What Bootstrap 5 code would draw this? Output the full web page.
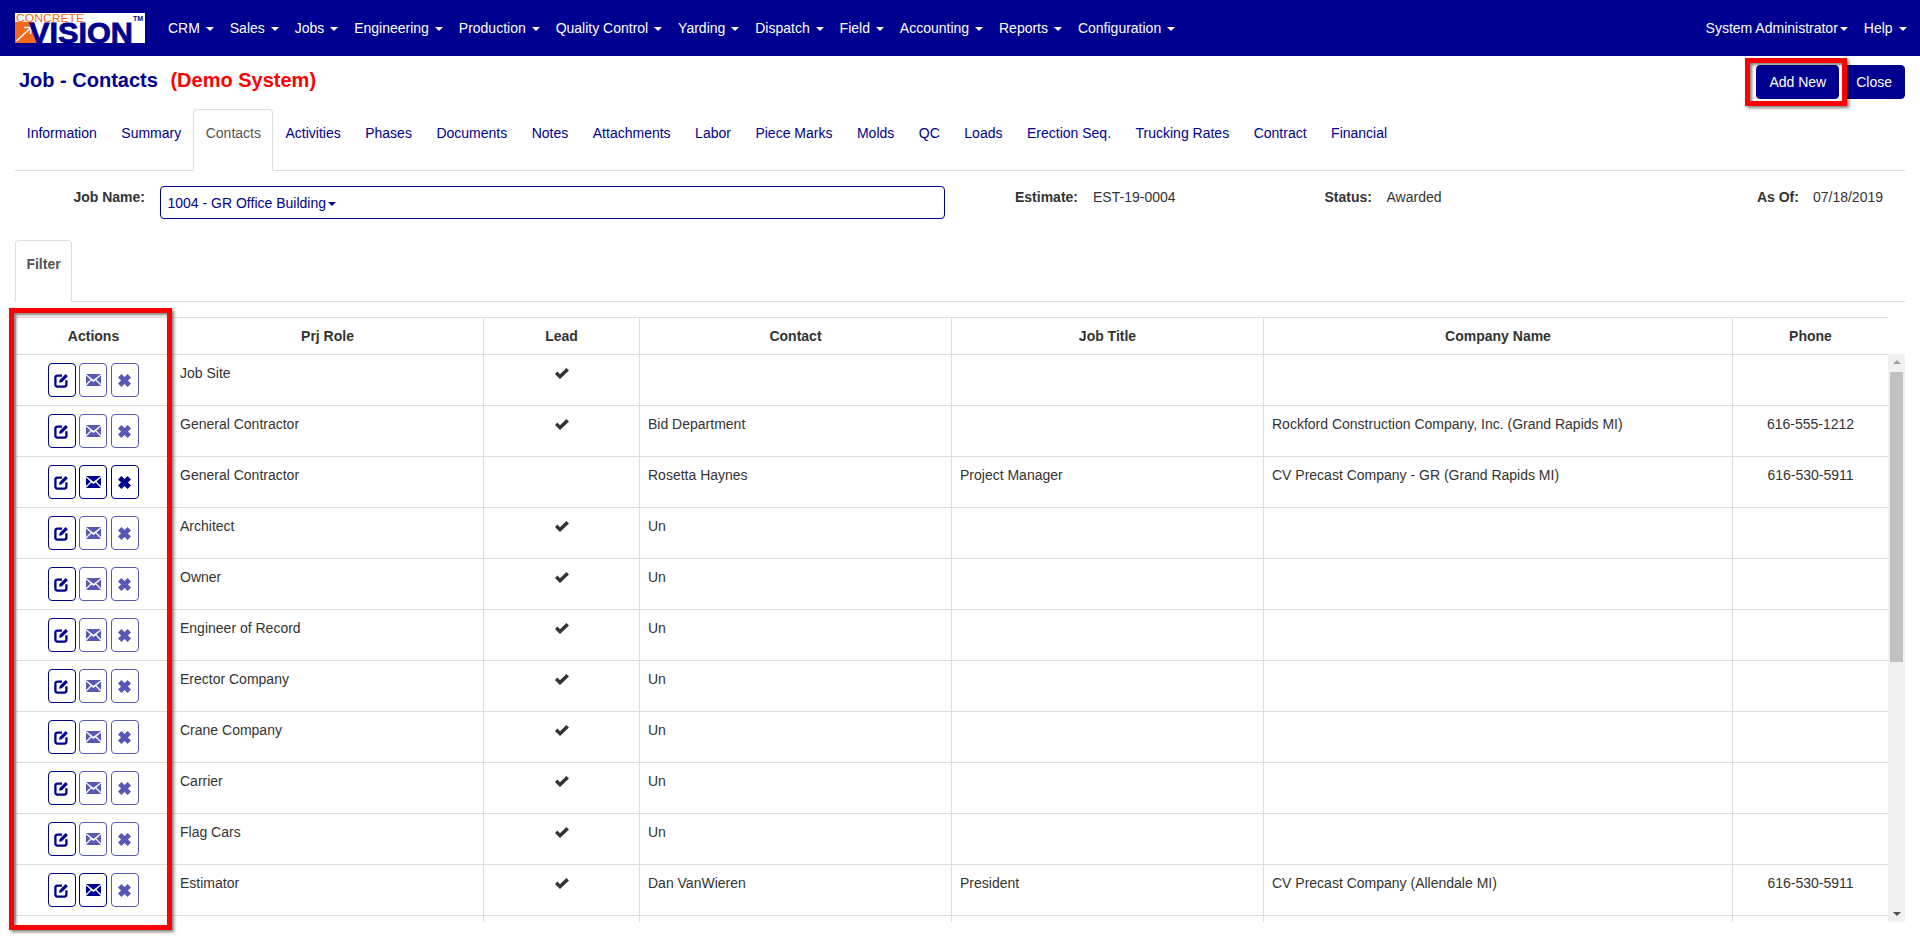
<!DOCTYPE html>
<html lang="en">
<head>
<meta charset="utf-8">
<title>Job - Contacts</title>
<link href="https://cdn.jsdelivr.net/npm/bootstrap@5.3.0/dist/css/bootstrap.min.css" rel="stylesheet">
<style>
:root{--cv-navy:#000090;--cv-line:#ddd;--cv-text:#333;}
html,body{height:937px;overflow:hidden;}
body{font-family:"Liberation Sans",Arial,sans-serif;font-size:14px;line-height:20px;color:var(--cv-text);background:#fff;position:relative;}
.topbar{background:var(--cv-navy);height:56px;padding:0 5.5px 0 15px;}
.topbar .brandmark{display:block;width:130px;height:30px;margin-right:15px;}
.topbar .brandmark svg{overflow:visible;}
.topbar .nav-link{color:#fff;padding:0 8px;font-size:14px;line-height:20px;}
.topbar .nav-link:hover{color:#fff;}
.dropdown-toggle::after{border-top:4px solid;border-left:4px solid transparent;border-right:4px solid transparent;border-bottom:0;margin-left:2px;vertical-align:middle;}
.pagewrap{padding:0 15px;}
.titlerow{height:53px;padding-top:9px;}
.pagetitle{font-size:20px;font-weight:700;line-height:30px;color:var(--cv-navy);margin:0 0 0 4px;}
.pagetitle .demotag{color:#f00;margin-left:7px;}
.cvbtn{background:var(--cv-navy);border:1px solid var(--cv-navy);color:#fff;font-size:14px;line-height:20px;padding:6px 12px;border-radius:4px;height:34px;}
.cvbtn:hover{background:var(--cv-navy);color:#fff;}
.tabstrip{--bs-nav-tabs-border-color:var(--cv-line);--bs-nav-tabs-border-radius:4px;--bs-nav-tabs-link-active-border-color:var(--cv-line) var(--cv-line) #fff;--bs-nav-tabs-link-active-color:#555;--bs-nav-link-color:var(--cv-navy);height:62px;}
.tabstrip .nav-item:first-child{margin-left:-.5px;}
.tabstrip .nav-link{padding:13px 11.25px 27px;font-size:14px;line-height:20px;height:62px;margin-bottom:-1px;}
.infobar{height:69px;padding-top:15px;}
.infobar dt,.infobar dd{margin:0;line-height:20px;padding-top:1px;}
.infobar dt{font-weight:700;}
.infobar .lbl-job{width:130px;text-align:right;margin-right:15px;}
.jobpicker{width:785px;height:33px;border:1px solid var(--cv-navy);border-radius:4px;color:var(--cv-navy);padding:6px 6.5px;margin:0 70px 0 0;background:#fff;text-align:left;line-height:20px;font-size:14px;}
.infobar .val-est{width:231.5px;margin-left:15px;}
.infobar .val-status{margin-left:14.5px;}
.infobar .val-asof{margin-left:14px;margin-right:22px;}
.filtertabs{height:62px;--bs-nav-tabs-border-color:var(--cv-line);--bs-nav-tabs-border-radius:4px;--bs-nav-tabs-link-active-border-color:var(--cv-line) var(--cv-line) #fff;--bs-nav-tabs-link-active-color:#555;}
.filtertabs .nav-link{font-weight:700;padding:13px 10.4px 27px;height:62px;margin-bottom:-1px;}
.gridarea{margin-top:15px;height:605px;}
.gridclip{width:1873px;height:605px;overflow:hidden;flex:none;}
.gridtable{table-layout:fixed;width:1873px;--bs-table-border-color:var(--cv-line);--bs-table-color:var(--cv-text);margin:0;border-collapse:collapse;}
.gridtable th{font-weight:700;text-align:center;height:37px;padding:8px;line-height:20px;vertical-align:middle;}
.gridtable td{height:51px;padding:8px;line-height:20px;vertical-align:top;}
.actcell{display:flex;justify-content:center;gap:3.5px;margin-right:1px;}
.actbtn{width:28px;height:34px;padding:0;background:#fff;border:1px solid var(--cv-navy);border-radius:4px;color:var(--cv-navy);display:flex;align-items:center;justify-content:center;--bs-btn-disabled-bg:#fff;--bs-btn-disabled-border-color:var(--cv-navy);--bs-btn-disabled-color:var(--cv-navy);}
.actbtn.disabled{opacity:.65;}
.actbtn svg{display:block;fill:currentColor;}
.tickmark{display:block;margin:5px auto 0;fill:var(--cv-text);}
.phonecell{text-align:center;}
.fakebar{width:17px;height:568px;margin-top:37px;background:#f1f1f1;position:relative;flex:none;padding-top:18px;}
.fakebar .thumbpart{width:13px;height:290px;margin-left:2px;background:#c1c1c1;}
.arrowup,.arrowdown{position:absolute;left:5px;width:0;height:0;border-left:4px solid transparent;border-right:4px solid transparent;}
.arrowup{top:6px;border-bottom:4px solid #a3a3a3;}
.arrowdown{bottom:6px;border-top:4px solid #505050;}
.callout{position:absolute;border:5px solid #f00;pointer-events:none;box-shadow:2px 2px 3px rgba(0,0,0,.5),inset 2px 2px 3px rgba(0,0,0,.5);z-index:5;}
.callout-add{left:1745px;top:58px;width:102px;height:48px;}
.callout-actions{left:9px;top:308px;width:163px;height:622px;}
</style>
</head>
<body>
<svg width="0" height="0" class="position-absolute">
  <symbol id="ic-edit" viewBox="0 0 15 15"><path d="M8 2.6H3.4A2 2 0 0 0 1.4 4.6v7a2 2 0 0 0 2 2h7a2 2 0 0 0 2-2V7.2" fill="none" stroke="currentColor" stroke-width="2.3"/><path d="M5.6 6.9 11.6 1l2.3 2.2-6 6-2.8.5z"/></symbol>
  <symbol id="ic-mail" viewBox="0 0 15 12"><path d="M0 0h15L7.5 5.8z"/><path d="M0 1.4 4.6 5.4 0 10zM15 1.4 10.4 5.4 15 10z"/><path d="M0 12 5.4 6.4 7.5 8 9.6 6.4 15 12z"/></symbol>
  <symbol id="ic-x" viewBox="0 0 13 13"><path d="M3.4 0 6.5 3.1 9.6 0 13 3.4 9.9 6.5 13 9.6 9.6 13 6.5 9.9 3.4 13 0 9.6 3.1 6.5 0 3.4z"/></symbol>
  <symbol id="ic-tick" viewBox="0 0 14 11"><path d="M0 6 2.4 3.6 5 6.2 11.4 0 14 2.4 5 11z"/></symbol>
</svg>

<nav class="topbar d-flex align-items-center">
  <a href="#" class="brandmark" aria-label="Concrete Vision">
    <svg width="130" height="30" viewBox="0 0 130 30">
      <rect width="130" height="30" fill="#fff"/>
      <path d="M0 9H19L25 30H0z" fill="#f26a1b"/>
      <path d="M1.5 28 15 15.5" stroke="#fff" stroke-width="1.5" fill="none"/>
      <path d="M9 14.5 16 14.5 15.5 21" stroke="#fff" stroke-width="1.5" fill="none"/>
      <text x="1" y="8.5" font-family="Liberation Sans" font-size="11.5" fill="#f26a1b" textLength="68" lengthAdjust="spacingAndGlyphs">CONCRETE</text>
      <text x="14" y="29.5" font-family="Liberation Sans" font-size="29" font-weight="700" fill="#000090" stroke="#000090" stroke-width=".8" textLength="104" lengthAdjust="spacingAndGlyphs">VISION</text>
      <text x="118" y="8" font-family="Liberation Sans" font-size="7" font-weight="700" fill="#000090" textLength="10" lengthAdjust="spacingAndGlyphs">TM</text>
    </svg>
  </a>
  <ul class="nav flex-nowrap">
    <li class="nav-item"><a class="nav-link dropdown-toggle" href="#">CRM </a></li>
    <li class="nav-item"><a class="nav-link dropdown-toggle" href="#">Sales </a></li>
    <li class="nav-item"><a class="nav-link dropdown-toggle" href="#">Jobs </a></li>
    <li class="nav-item"><a class="nav-link dropdown-toggle" href="#">Engineering </a></li>
    <li class="nav-item"><a class="nav-link dropdown-toggle" href="#">Production </a></li>
    <li class="nav-item"><a class="nav-link dropdown-toggle" href="#">Quality Control </a></li>
    <li class="nav-item"><a class="nav-link dropdown-toggle" href="#">Yarding </a></li>
    <li class="nav-item"><a class="nav-link dropdown-toggle" href="#">Dispatch </a></li>
    <li class="nav-item"><a class="nav-link dropdown-toggle" href="#">Field </a></li>
    <li class="nav-item"><a class="nav-link dropdown-toggle" href="#">Accounting </a></li>
    <li class="nav-item"><a class="nav-link dropdown-toggle" href="#">Reports </a></li>
    <li class="nav-item"><a class="nav-link dropdown-toggle" href="#">Configuration </a></li>
  </ul>
  <ul class="nav flex-nowrap ms-auto">
    <li class="nav-item"><a class="nav-link dropdown-toggle" href="#">System Administrator</a></li>
    <li class="nav-item"><a class="nav-link dropdown-toggle" href="#">Help </a></li>
  </ul>
</nav>

<main class="pagewrap">
  <div class="titlerow d-flex justify-content-between align-items-start">
    <h1 class="pagetitle">Job - Contacts <span class="demotag">(Demo System)</span></h1>
    <div class="d-flex gap-1">
      <button type="button" class="btn cvbtn">Add New</button>
      <button type="button" class="btn cvbtn">Close</button>
    </div>
  </div>

  <ul class="nav nav-tabs tabstrip flex-nowrap">
    <li class="nav-item"><a class="nav-link" href="#">Information</a></li>
    <li class="nav-item"><a class="nav-link" href="#">Summary</a></li>
    <li class="nav-item"><a class="nav-link active" href="#">Contacts</a></li>
    <li class="nav-item"><a class="nav-link" href="#">Activities</a></li>
    <li class="nav-item"><a class="nav-link" href="#">Phases</a></li>
    <li class="nav-item"><a class="nav-link" href="#">Documents</a></li>
    <li class="nav-item"><a class="nav-link" href="#">Notes</a></li>
    <li class="nav-item"><a class="nav-link" href="#">Attachments</a></li>
    <li class="nav-item"><a class="nav-link" href="#">Labor</a></li>
    <li class="nav-item"><a class="nav-link" href="#">Piece Marks</a></li>
    <li class="nav-item"><a class="nav-link" href="#">Molds</a></li>
    <li class="nav-item"><a class="nav-link" href="#">QC</a></li>
    <li class="nav-item"><a class="nav-link" href="#">Loads</a></li>
    <li class="nav-item"><a class="nav-link" href="#">Erection Seq.</a></li>
    <li class="nav-item"><a class="nav-link" href="#">Trucking Rates</a></li>
    <li class="nav-item"><a class="nav-link" href="#">Contract</a></li>
    <li class="nav-item"><a class="nav-link" href="#">Financial</a></li>
  </ul>

  <dl class="infobar d-flex align-items-start m-0">
    <dt class="lbl-job">Job Name:</dt>
    <dd class="p-0"><div class="jobpicker dropdown-toggle">1004 - GR Office Building</div></dd>
    <dt>Estimate:</dt>
    <dd class="val-est">EST-19-0004</dd>
    <dt>Status:</dt>
    <dd class="val-status">Awarded</dd>
    <dt class="ms-auto">As Of:</dt>
    <dd class="val-asof">07/18/2019</dd>
  </dl>

  <ul class="nav nav-tabs filtertabs">
    <li class="nav-item"><a class="nav-link active" href="#">Filter</a></li>
  </ul>

  <div class="gridarea d-flex">
    <div class="gridclip">
      <table class="table table-bordered gridtable">
        <colgroup><col style="width:156px"><col style="width:312px"><col style="width:156px"><col style="width:312px"><col style="width:312px"><col style="width:469px"><col style="width:156px"></colgroup>
        <thead>
          <tr><th>Actions</th><th>Prj Role</th><th>Lead</th><th>Contact</th><th>Job Title</th><th>Company Name</th><th>Phone</th></tr>
        </thead>
        <tbody>
          <tr><td><div class="actcell"><a class="btn actbtn"><svg width="15" height="15"><use href="#ic-edit"/></svg></a><a class="btn actbtn disabled"><svg width="15" height="12"><use href="#ic-mail"/></svg></a><a class="btn actbtn disabled"><svg width="13" height="13"><use href="#ic-x"/></svg></a></div></td><td>Job Site</td><td><svg class="tickmark" width="14" height="11"><use href="#ic-tick"/></svg></td><td></td><td></td><td></td><td class="phonecell"></td></tr>
          <tr><td><div class="actcell"><a class="btn actbtn"><svg width="15" height="15"><use href="#ic-edit"/></svg></a><a class="btn actbtn disabled"><svg width="15" height="12"><use href="#ic-mail"/></svg></a><a class="btn actbtn disabled"><svg width="13" height="13"><use href="#ic-x"/></svg></a></div></td><td>General Contractor</td><td><svg class="tickmark" width="14" height="11"><use href="#ic-tick"/></svg></td><td>Bid Department</td><td></td><td>Rockford Construction Company, Inc. (Grand Rapids MI)</td><td class="phonecell">616-555-1212</td></tr>
          <tr><td><div class="actcell"><a class="btn actbtn"><svg width="15" height="15"><use href="#ic-edit"/></svg></a><a class="btn actbtn"><svg width="15" height="12"><use href="#ic-mail"/></svg></a><a class="btn actbtn"><svg width="13" height="13"><use href="#ic-x"/></svg></a></div></td><td>General Contractor</td><td></td><td>Rosetta Haynes</td><td>Project Manager</td><td>CV Precast Company - GR (Grand Rapids MI)</td><td class="phonecell">616-530-5911</td></tr>
          <tr><td><div class="actcell"><a class="btn actbtn"><svg width="15" height="15"><use href="#ic-edit"/></svg></a><a class="btn actbtn disabled"><svg width="15" height="12"><use href="#ic-mail"/></svg></a><a class="btn actbtn disabled"><svg width="13" height="13"><use href="#ic-x"/></svg></a></div></td><td>Architect</td><td><svg class="tickmark" width="14" height="11"><use href="#ic-tick"/></svg></td><td>Un</td><td></td><td></td><td class="phonecell"></td></tr>
          <tr><td><div class="actcell"><a class="btn actbtn"><svg width="15" height="15"><use href="#ic-edit"/></svg></a><a class="btn actbtn disabled"><svg width="15" height="12"><use href="#ic-mail"/></svg></a><a class="btn actbtn disabled"><svg width="13" height="13"><use href="#ic-x"/></svg></a></div></td><td>Owner</td><td><svg class="tickmark" width="14" height="11"><use href="#ic-tick"/></svg></td><td>Un</td><td></td><td></td><td class="phonecell"></td></tr>
          <tr><td><div class="actcell"><a class="btn actbtn"><svg width="15" height="15"><use href="#ic-edit"/></svg></a><a class="btn actbtn disabled"><svg width="15" height="12"><use href="#ic-mail"/></svg></a><a class="btn actbtn disabled"><svg width="13" height="13"><use href="#ic-x"/></svg></a></div></td><td>Engineer of Record</td><td><svg class="tickmark" width="14" height="11"><use href="#ic-tick"/></svg></td><td>Un</td><td></td><td></td><td class="phonecell"></td></tr>
          <tr><td><div class="actcell"><a class="btn actbtn"><svg width="15" height="15"><use href="#ic-edit"/></svg></a><a class="btn actbtn disabled"><svg width="15" height="12"><use href="#ic-mail"/></svg></a><a class="btn actbtn disabled"><svg width="13" height="13"><use href="#ic-x"/></svg></a></div></td><td>Erector Company</td><td><svg class="tickmark" width="14" height="11"><use href="#ic-tick"/></svg></td><td>Un</td><td></td><td></td><td class="phonecell"></td></tr>
          <tr><td><div class="actcell"><a class="btn actbtn"><svg width="15" height="15"><use href="#ic-edit"/></svg></a><a class="btn actbtn disabled"><svg width="15" height="12"><use href="#ic-mail"/></svg></a><a class="btn actbtn disabled"><svg width="13" height="13"><use href="#ic-x"/></svg></a></div></td><td>Crane Company</td><td><svg class="tickmark" width="14" height="11"><use href="#ic-tick"/></svg></td><td>Un</td><td></td><td></td><td class="phonecell"></td></tr>
          <tr><td><div class="actcell"><a class="btn actbtn"><svg width="15" height="15"><use href="#ic-edit"/></svg></a><a class="btn actbtn disabled"><svg width="15" height="12"><use href="#ic-mail"/></svg></a><a class="btn actbtn disabled"><svg width="13" height="13"><use href="#ic-x"/></svg></a></div></td><td>Carrier</td><td><svg class="tickmark" width="14" height="11"><use href="#ic-tick"/></svg></td><td>Un</td><td></td><td></td><td class="phonecell"></td></tr>
          <tr><td><div class="actcell"><a class="btn actbtn"><svg width="15" height="15"><use href="#ic-edit"/></svg></a><a class="btn actbtn disabled"><svg width="15" height="12"><use href="#ic-mail"/></svg></a><a class="btn actbtn disabled"><svg width="13" height="13"><use href="#ic-x"/></svg></a></div></td><td>Flag Cars</td><td><svg class="tickmark" width="14" height="11"><use href="#ic-tick"/></svg></td><td>Un</td><td></td><td></td><td class="phonecell"></td></tr>
          <tr><td><div class="actcell"><a class="btn actbtn"><svg width="15" height="15"><use href="#ic-edit"/></svg></a><a class="btn actbtn"><svg width="15" height="12"><use href="#ic-mail"/></svg></a><a class="btn actbtn disabled"><svg width="13" height="13"><use href="#ic-x"/></svg></a></div></td><td>Estimator</td><td><svg class="tickmark" width="14" height="11"><use href="#ic-tick"/></svg></td><td>Dan VanWieren</td><td>President</td><td>CV Precast Company (Allendale MI)</td><td class="phonecell">616-530-5911</td></tr>
          <tr><td></td><td></td><td></td><td></td><td></td><td></td><td></td></tr>
        </tbody>
      </table>
    </div>
    <div class="fakebar" aria-hidden="true">
      <span class="arrowup"></span>
      <div class="thumbpart"></div>
      <span class="arrowdown"></span>
    </div>
  </div>
</main>

<div class="callout callout-add"></div>
<div class="callout callout-actions"></div>
</body>
</html>
